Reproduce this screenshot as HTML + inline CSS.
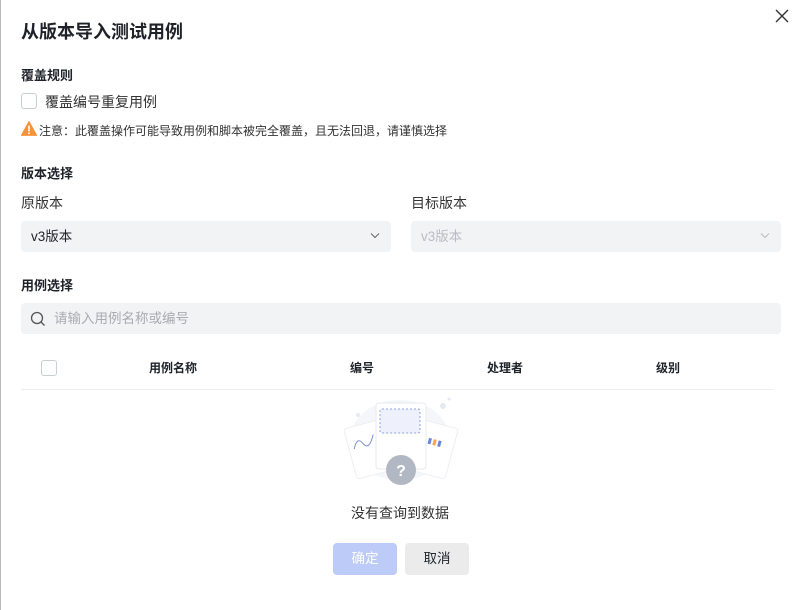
<!DOCTYPE html>
<html><head><meta charset="utf-8"><style>
body{margin:0;width:797px;height:610px;background:#fff;font-family:"Liberation Sans","Noto Sans CJK SC",sans-serif;color:#1f2329;position:relative;overflow:hidden}
.a{position:absolute;white-space:nowrap}
.h{font-size:13px;font-weight:bold;color:#1f2329}
.sel{position:absolute;height:31px;background:#f2f3f5;border-radius:4px;font-size:13.5px;line-height:31px;padding-left:10px;box-sizing:border-box}
.th{position:absolute;top:359px;font-size:12px;font-weight:bold;color:#1f2329;transform:translateX(-50%)}
.cb{position:absolute;width:14px;height:14px;border:1px solid #c9cdd4;border-radius:3px;background:#fff}
</style></head><body>
<div style="position:absolute;left:0;top:0;width:1px;height:610px;background:#bbb"></div>
<div class="a" style="left:21px;top:18px;font-size:18px;font-weight:bold">从版本导入测试用例</div>
<svg class="a" style="left:775px;top:9px" width="14" height="14" viewBox="0 0 14 14"><path d="M1 1L13 13M13 1L1 13" stroke="#333" stroke-width="1.4"/></svg>
<div class="a h" style="left:21px;top:65px">覆盖规则</div>
<div class="cb" style="left:21px;top:93px"></div>
<div class="a" style="left:45px;top:92px;font-size:14px;color:#333">覆盖编号重复用例</div>
<svg class="a" style="left:21px;top:121px" width="16" height="15" viewBox="0 0 14 13"><path d="M7 0.5L13.6 12.5H0.4Z" fill="#f7923b" stroke="#f7923b" stroke-linejoin="round"/><rect x="6.3" y="4" width="1.4" height="5" fill="#fff"/><rect x="6.3" y="10" width="1.4" height="1.4" fill="#fff"/></svg>
<div class="a" style="left:39px;top:122px;font-size:12px;color:#333">注意：此覆盖操作可能导致用例和脚本被完全覆盖，且无法回退，请谨慎选择</div>
<div class="a h" style="left:21px;top:163px">版本选择</div>
<div class="a" style="left:21px;top:193px;font-size:14px;color:#333">原版本</div>
<div class="a" style="left:411px;top:193px;font-size:14px;color:#333">目标版本</div>
<div class="sel" style="left:21px;top:221px;width:370px;color:#1f2329">v3版本</div>
<svg class="a" style="left:370px;top:232px" width="10" height="7" viewBox="0 0 10 7"><path d="M1 1.5L5 5.5L9 1.5" fill="none" stroke="#666" stroke-width="1"/></svg>
<div class="sel" style="left:411px;top:221px;width:370px;color:#b8bcc4">v3版本</div>
<svg class="a" style="left:760px;top:232px" width="10" height="7" viewBox="0 0 10 7"><path d="M1 1.5L5 5.5L9 1.5" fill="none" stroke="#bbb" stroke-width="1"/></svg>
<div class="a h" style="left:21px;top:275px">用例选择</div>
<div class="sel" style="left:21px;top:303px;width:760px;padding-left:33px;color:#a8abb2">请输入用例名称或编号</div>
<svg class="a" style="left:30px;top:311px" width="16" height="16" viewBox="0 0 16 16"><circle cx="7" cy="7" r="5.5" fill="none" stroke="#555" stroke-width="1.3"/><path d="M11 11L14.5 14.5" stroke="#555" stroke-width="1.3"/></svg>
<div class="cb" style="left:41px;top:360px"></div>
<div class="th" style="left:173px">用例名称</div>
<div class="th" style="left:362px">编号</div>
<div class="th" style="left:505px">处理者</div>
<div class="th" style="left:668px">级别</div>
<div style="position:absolute;left:21px;top:389px;width:752px;height:1px;background:#ebedf0"></div>
<svg class="a" style="left:340px;top:395px" width="125" height="95" viewBox="0 0 125 95">
<ellipse cx="60" cy="45" rx="50" ry="40" fill="#f4f6fa"/>
<circle cx="103" cy="11" r="3" fill="#e6e9f2"/><circle cx="109" cy="4" r="1.5" fill="#e6e9f2"/><circle cx="18" cy="20" r="2" fill="#e6e9f2"/>
<g transform="rotate(-15 30 55)"><rect x="10" y="28" width="38" height="52" rx="3" fill="#fff" stroke="#eceef3"/><path d="M15 50 q6 -12 10 -3 t12 -6" fill="none" stroke="#7f8ed8" stroke-width="1"/></g>
<g transform="rotate(15 92 55)"><rect x="74" y="28" width="38" height="52" rx="3" fill="#fff" stroke="#eceef3"/><rect x="86" y="44" width="3" height="6" fill="#6b86e0"/><rect x="91" y="44" width="3" height="6" fill="#f5a55a"/><rect x="96" y="44" width="3" height="6" fill="#6b86e0"/></g>
<rect x="36" y="8" width="50" height="66" rx="3" fill="#fff" stroke="#e6e9f0"/>
<rect x="40" y="14" width="40" height="24" rx="2" fill="#eef1fb" stroke="#8fa1e8" stroke-dasharray="2 2"/>
<circle cx="61" cy="75" r="15" fill="#b2b7c4"/>
<text x="61" y="81" font-size="16" font-weight="bold" fill="#fff" text-anchor="middle" font-family="Liberation Sans">?</text>
</svg>
<div class="a" style="left:351px;top:503px;font-size:14px;color:#333">没有查询到数据</div>
<div class="a" style="left:333px;top:543px;width:64px;height:32px;background:#bccbf7;border-radius:4px;color:#fff;font-size:13.5px;line-height:32px;text-align:center">确定</div>
<div class="a" style="left:405px;top:543px;width:64px;height:32px;background:#ebebeb;border-radius:4px;color:#1f2329;font-size:13.5px;line-height:32px;text-align:center">取消</div>
</body></html>
